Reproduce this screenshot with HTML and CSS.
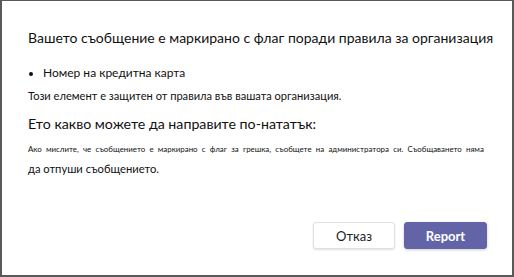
FILE: index.html
```html
<!DOCTYPE html>
<html>
	<head>
		<meta charset="utf-8">
		<link rel="stylesheet" href="styles.css">
	</head>
	<body>
		<div class="dialog">
			<h1 class="title">Вашето съобщение е маркирано с флаг поради правила за организация</h1>
			<ul class="matches">
				<li>Номер на кредитна карта</li>
			</ul>
			<p class="note">Този елемент е защитен от правила във вашата организация.</p>
			<h2 class="subtitle">Ето какво можете да направите по-нататък:</h2>
			<p class="advice"><span class="advice-small">Ако мислите, че съобщението е маркирано с флаг за грешка, съобщете на администратора си. Съобщаването няма</span><br>да отпуши съобщението.</p>
			<div class="actions">
				<button class="btn btn-cancel">Отказ</button>
				<button class="btn btn-primary">Report</button>
			</div>
		</div>
	</body>
</html>
```

FILE: styles.css
```css
html, body {
	margin: 0;
	padding: 0;
	background: #fff;
}
.dialog {
	width: 514px;
	height: 277px;
	box-sizing: border-box;
	border: 2px solid #595959;
	border-top-width: 1px;
	padding: 27px 25px 0 26px;
	font-family: "Lato", "Noto Sans", sans-serif;
	color: #111;
	display: flex;
	flex-direction: column;
}
.title {
	margin: 0;
	font-size: 14px;
	font-weight: normal;
	line-height: 20px;
	white-space: nowrap;
}
.matches {
	margin: 17px 0 0 0;
	padding-left: 15px;
	font-size: 12px;
	line-height: 16px;
}
.matches li::marker {
	font-size: 11px;
}
.note {
	margin: 7px 0 0 0;
	font-size: 11.1px;
	line-height: 15px;
}
.subtitle {
	margin: 11px 0 0 0;
	font-size: 14.2px;
	font-weight: normal;
	line-height: 20px;
}
.advice {
	margin: 4px 0 0 0;
	font-size: 11.2px;
	line-height: 20px;
}
.advice-small {
	font-size: 7.9px;
	word-spacing: 2.2px;
}
.actions {
	margin-top: auto;
	margin-bottom: 26px;
	display: flex;
	justify-content: flex-end;
	gap: 9px;
}
.btn {
	width: 82px;
	height: 27px;
	border-radius: 3px;
	font-family: "Lato", "Noto Sans", sans-serif;
	font-size: 13px;
	cursor: pointer;
}
.btn-cancel {
	background: #fff;
	border: 1px solid #e1e1e1;
	color: #222;
	box-shadow: 0 1px 2px rgba(0, 0, 0, 0.12);
}
.btn-primary {
	width: 83px;
	background: #6264a7;
	border: 1px solid #6264a7;
	color: #fff;
	font-weight: bold;
	box-shadow: 0 1px 3px rgba(0, 0, 0, 0.2);
}
```
